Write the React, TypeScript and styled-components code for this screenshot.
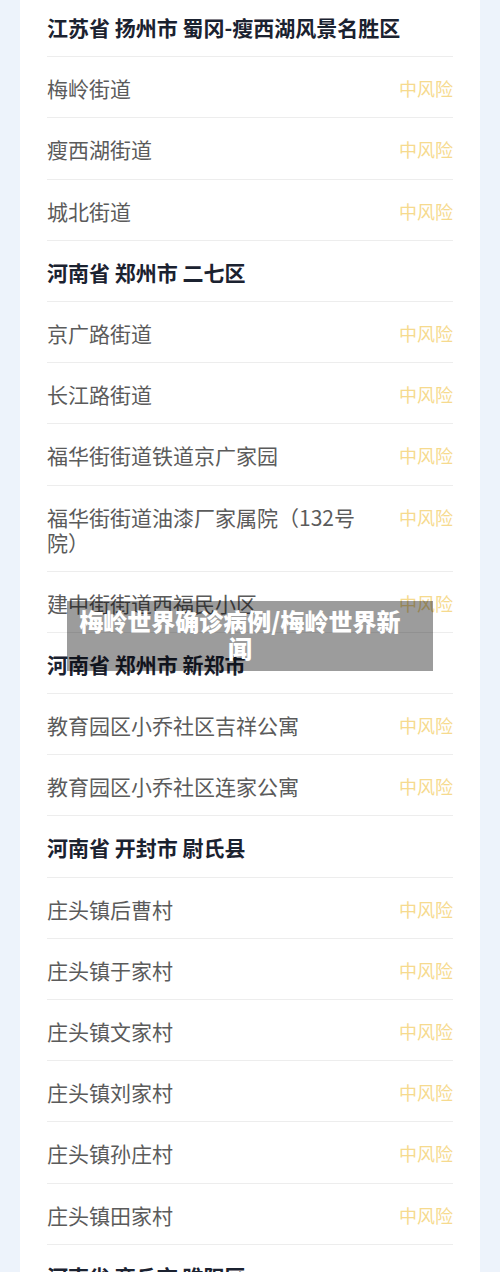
import styled, { createGlobalStyle } from "styled-components";

const GlobalStyle = createGlobalStyle`
  body {
    margin: 0;
    background: #edf3fb;
    font-family: "Noto Sans CJK SC", "Noto Sans", sans-serif;
    overflow: hidden;
  }
`;

const S = {
  Page: styled.div`
    position: relative;
    height: 1272px;
    padding: 0 20px;
    overflow: hidden;
  `,
  Card: styled.div`
    margin-top: -4px;
    background: #ffffff;
    padding: 0 27px;
  `,
  Row: styled.div<{ $header?: boolean }>`
    display: flex;
    align-items: flex-start;
    justify-content: space-between;
    gap: 24px;
    padding: 19px 0 16.2px;
    border-bottom: 1px solid #ededed;
    line-height: 25px;
    font-size: 21px;
    color: ${(p) => (p.$header ? "#1b2230" : "#5b5b5b")};
    font-weight: ${(p) => (p.$header ? 700 : 400)};
  `,
  Name: styled.span`
    flex: 1;
    min-width: 0;
  `,
  Risk: styled.span`
    flex-shrink: 0;
    font-size: 18px;
    color: #f6da8e;
  `,
  Banner: styled.div`
    position: absolute;
    top: 601px;
    left: 67px;
    width: 366px;
    box-sizing: border-box;
    padding: 6px 30px 10px 10px;
    background: rgba(0, 0, 0, 0.39);
    color: #ffffff;
    font-size: 24px;
    font-weight: 900;
    line-height: 27px;
    text-align: center;
  `,
};

type Item = { header: string; places: string[] };

const groups: Item[] = [
  {
    header: "江苏省 扬州市 蜀冈-瘦西湖风景名胜区",
    places: ["梅岭街道", "瘦西湖街道", "城北街道"],
  },
  {
    header: "河南省 郑州市 二七区",
    places: [
      "京广路街道",
      "长江路街道",
      "福华街街道铁道京广家园",
      "福华街街道油漆厂家属院（132号院）",
      "建中街街道西福民小区",
    ],
  },
  {
    header: "河南省 郑州市 新郑市",
    places: ["教育园区小乔社区吉祥公寓", "教育园区小乔社区连家公寓"],
  },
  {
    header: "河南省 开封市 尉氏县",
    places: [
      "庄头镇后曹村",
      "庄头镇于家村",
      "庄头镇文家村",
      "庄头镇刘家村",
      "庄头镇孙庄村",
      "庄头镇田家村",
    ],
  },
  { header: "河南省 商丘市 睢阳区", places: [] },
];

const App = () => {
  return (
    <S.Page>
      <GlobalStyle />
      <S.Card>
        {groups.map((g) => (
          <div key={g.header}>
            <S.Row $header>
              <S.Name>{g.header}</S.Name>
            </S.Row>
            {g.places.map((p) => (
              <S.Row key={p}>
                <S.Name>{p}</S.Name>
                <S.Risk>中风险</S.Risk>
              </S.Row>
            ))}
          </div>
        ))}
      </S.Card>
      <S.Banner>梅岭世界确诊病例/梅岭世界新闻</S.Banner>
    </S.Page>
  );
};

export default App;
